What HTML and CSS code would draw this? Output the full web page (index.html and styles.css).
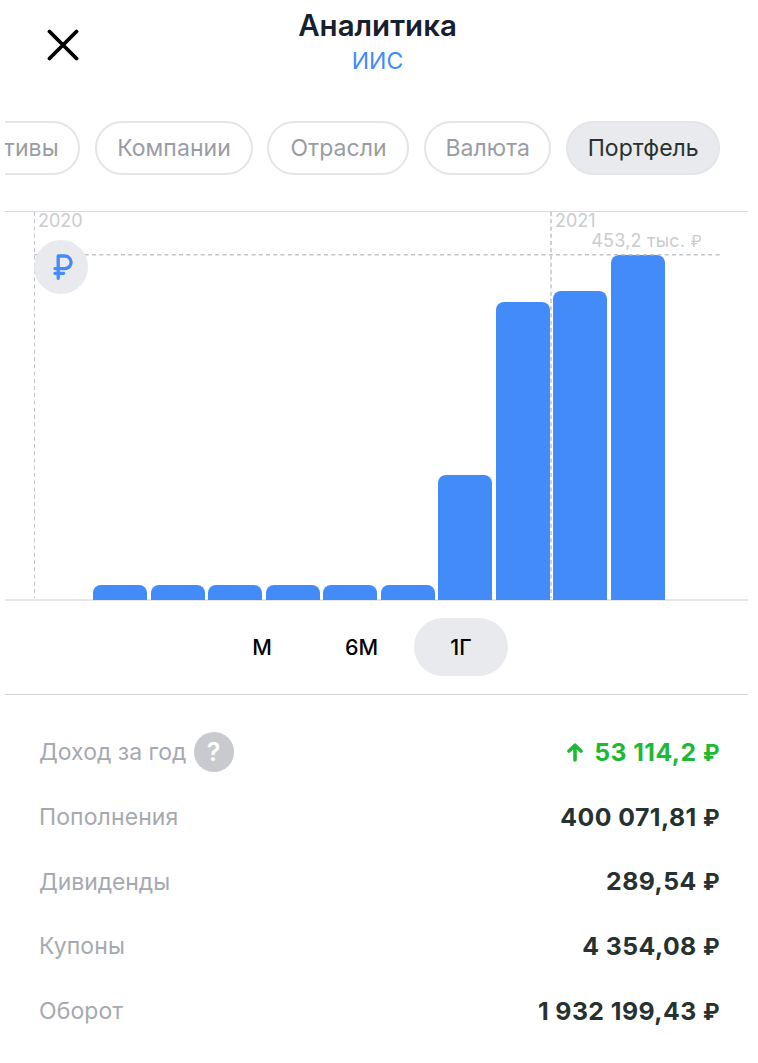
FILE: index.html
```html
<!DOCTYPE html>
<html lang="ru">
<head>
<meta charset="UTF-8">
<title>Аналитика</title>
<link rel="stylesheet" href="styles.css">
</head>

<body>

<div id="wrapper">
	<div id="header">
		<svg class="close" width="32" height="32" viewBox="0 0 32 32">
			<path d="M2.5 2.5 L29.5 29.5 M29.5 2.5 L2.5 29.5" />
		</svg>
		<div class="heading">
			<h1>Аналитика</h1>
			<a class="account">ИИС</a>
		</div>
	</div><!-- header -->

	<div id="tabs">
		<ul>
			<li class="assets">Активы</li>
			<li class="companies">Компании</li>
			<li class="sectors">Отрасли</li>
			<li class="currency">Валюта</li>
			<li class="portfolio activetab">Портфель</li>
		</ul>
	</div><!-- tabs -->

	<div id="chart">
		<svg class="grid" width="743" height="390" viewBox="0 0 743 390">
			<path class="thin" d="M29.5 1 V387" />
			<path class="thick" d="M546 1 V387" />
		</svg>
		<div class="bars">
			<div class="bar" style="height: 15px"></div>
			<div class="bar" style="height: 15px"></div>
			<div class="bar" style="height: 15px"></div>
			<div class="bar" style="height: 15px"></div>
			<div class="bar" style="height: 15px"></div>
			<div class="bar" style="height: 15px"></div>
			<div class="bar" style="height: 125px"></div>
			<div class="bar" style="height: 298.5px"></div>
			<div class="bar" style="height: 309px"></div>
			<div class="bar" style="height: 345.5px"></div>
		</div>
		<svg class="grid" width="743" height="390" viewBox="0 0 743 390">
			<path class="thick" d="M29 43.8 H716" />
		</svg>
		<span class="year y2020">2020</span>
		<span class="year y2021">2021</span>
		<span class="year max">453,2 тыс. <i>₽</i></span>
		<div class="ruble">
			<svg width="20" height="26" viewBox="0 0 20 26">
				<path d="M5.2 24.3 V2 H11.8 A6.3 6.3 0 0 1 11.8 14.6 H2 M2 19.3 H10.6" />
			</svg>
		</div>
	</div><!-- chart -->

	<div id="period">
		<span>М</span>
		<span>6М</span>
		<span class="active">1Г</span>
	</div><!-- period -->

	<div id="totals">
		<div class="row">
			<span class="label income">Доход за год</span>
			<span class="help">?</span>
			<svg class="up" width="16" height="19" viewBox="0 0 16 19">
				<path d="M8 17 V3 M2 8 L8 2.2 L14 8" />
			</svg>
			<b class="profit">53 114,2 <i>₽</i></b>
		</div>
		<div class="row"><span class="label">Пополнения</span><b>400 071,81 <i>₽</i></b></div>
		<div class="row"><span class="label dividends">Дивиденды</span><b>289,54 <i>₽</i></b></div>
		<div class="row"><span class="label">Купоны</span><b>4 354,08 <i>₽</i></b></div>
		<div class="row"><span class="label">Оборот</span><b>1 932 199,43 <i>₽</i></b></div>
	</div><!-- totals -->
</div><!-- wrapper -->

</body>
</html>
```
FILE: styles.css
```css
body {
	margin: 0;
	font: 23px/28px Inter, "Noto Sans", sans-serif;
	background: #fff;
}

/* currency sign, a bit smaller than the digits */
i {
	font-size: 0.9em;
	font-style: normal;
}

#wrapper {
	width: 743px;
	height: 1063px;
	margin-left: 5px;
	overflow: hidden;
}

#header {
	display: grid;
	grid-template-columns: 265px 215px 1fr;
	height: 121px;
}

.close {
	margin: 29px 0 0 42px;
	fill: none;
	stroke: #000;
	stroke-width: 3.8;
	stroke-linecap: round;
}

.heading {
	text-align: center;
}

h1 {
	margin: 8px 0 0;
	font-size: 29.5px;
	line-height: 35px;
	font-weight: 600;
	color: #17202e;
}

.account {
	display: block;
	margin-top: 4px;
	color: #428bf9;
}

#tabs {
	overflow: hidden;
	height: 90px;
}

#tabs ul {
	display: flex;
	justify-content: flex-end;
	gap: 14.5px;
	list-style-type: none;
	margin: 0;
	padding: 0 28px 0 0;
}

#tabs li {
	box-sizing: border-box;
	flex: none;
	height: 54px;
	border: 2px solid #e4e5e7;
	border-radius: 27px;
	padding-left: 1px;
	line-height: 50px;
	text-align: center;
	letter-spacing: 0.05px;
	color: #9a9ca5;
}

#tabs .assets { width: 130px; padding-left: 4px; }
#tabs .companies { width: 158px; }
#tabs .sectors { width: 142px; }
#tabs .currency { width: 127.5px; }
#tabs .portfolio { width: 154.5px; }

#tabs li.activetab {
	background: #e9eaee;
	color: #263230;
}

#chart {
	position: relative;
	box-sizing: border-box;
	height: 390px;
	border-top: 1px solid #d8d9da;
	border-bottom: 2px solid #e6e7e9;
}

.bars {
	display: flex;
	align-items: flex-end;
	gap: 3.5px;
	height: 388px;
	padding-left: 88px;
}

.bar {
	width: 54px;
	border-radius: 8px 8px 0 0;
	background: #428bf9;
}

.grid {
	position: absolute;
	top: -1px;
	left: 0;
	fill: none;
	stroke: #c4c5c8;
	stroke-dasharray: 4 3.25;
}

.grid .thin { stroke-width: 1; }
.grid .thick { stroke-width: 1.6; }

.year {
	position: absolute;
	font-size: 18px;
	line-height: 22px;
	color: #cbccce;
}

.y2020 {
	top: -2px;
	left: 33px;
}

.y2021 {
	top: -2px;
	left: 550px;
}

.max {
	top: 18px;
	right: 46px;
	letter-spacing: 0.2px;
}

.ruble {
	position: absolute;
	top: 28px;
	left: 29px;
	display: flex;
	align-items: center;
	justify-content: center;
	box-sizing: border-box;
	width: 54px;
	height: 54px;
	padding-left: 4px;
	border-radius: 50%;
	background: #e9eaee;
}

.ruble svg {
	fill: none;
	stroke: #428bf9;
	stroke-width: 3.3;
	stroke-linecap: round;
	stroke-linejoin: round;
}

#period {
	display: flex;
	gap: 5.5px;
	box-sizing: border-box;
	height: 94px;
	padding: 17px 0 0 210px;
	border-bottom: 1px solid #d3d4d6;
}

#period span {
	width: 94px;
	height: 58px;
	border-radius: 29px;
	font-size: 21.5px;
	font-weight: 500;
	line-height: 59px;
	text-align: center;
	color: #000;
}

#period .active {
	background: #e9eaee;
}

#totals {
	padding: 25px 28px 0 34px;
}

.row {
	display: flex;
	align-items: center;
	height: 64.7px;
}

.label {
	letter-spacing: 0.1px;
	color: #a6a9b0;
}

.income {
	letter-spacing: 0;
}

.dividends {
	letter-spacing: -0.1px;
}

.help {
	width: 40px;
	height: 40px;
	margin-left: 7px;
	border-radius: 50%;
	font-size: 25px;
	font-weight: 600;
	line-height: 41px;
	text-align: center;
	background: #c9cad0;
	color: #fff;
}

.up {
	margin: 0 11px 0 auto;
	fill: none;
	stroke: #1eb935;
	stroke-width: 3.6;
	stroke-linecap: round;
	stroke-linejoin: round;
}

.row b {
	margin-left: auto;
	font-size: 24.8px;
	font-weight: 700;
	letter-spacing: 0.45px;
	color: #263230;
}

.row .profit {
	margin-left: 0;
	color: #1eb935;
}
```
